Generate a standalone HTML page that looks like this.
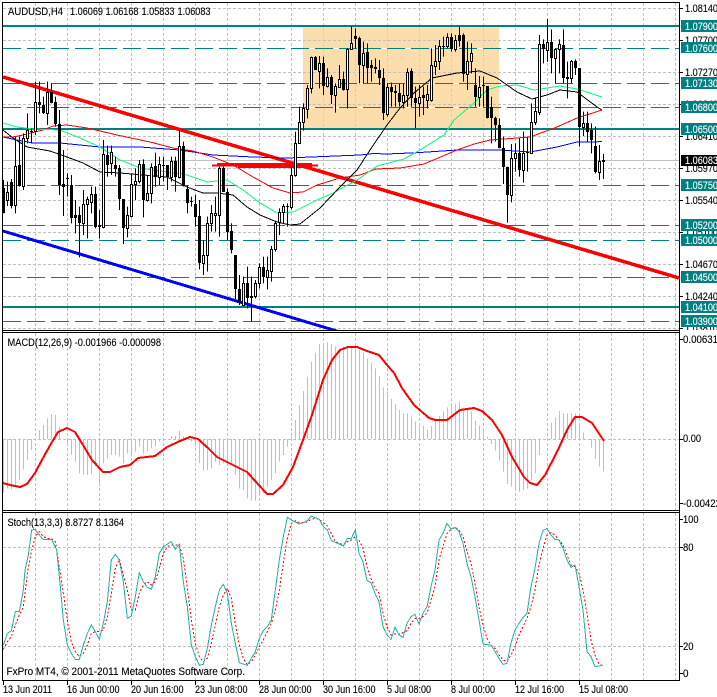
<!DOCTYPE html>
<html><head><meta charset="utf-8"><title>AUDUSD,H4</title>
<style>html,body{margin:0;padding:0;background:#fff;width:717px;height:697px;overflow:hidden}svg{display:block}
text{font-family:"Liberation Sans",sans-serif;font-size:11px;fill:#000;stroke:#000;stroke-width:.12}
.w{fill:#fff;stroke:#fff}</style></head><body>
<svg width="717" height="697" viewBox="0 0 717 697" xmlns="http://www.w3.org/2000/svg">
<defs><clipPath id="m"><rect x="3" y="3" width="676" height="327"/></clipPath><clipPath id="a"><rect x="680" y="0" width="37" height="330"/></clipPath></defs>
<rect width="717" height="697" fill="#fff"/>
<rect x="303" y="27" width="196" height="101" fill="#fcdeac"/>
<g shape-rendering="crispEdges">
<path d="M3 8.5H679M3 40.5H679M3 72.5H679M3 104.5H679M3 136.5H679M3 168.5H679M3 200.5H679M3 232.5H679M3 264.5H679M3 296.5H679M3 328.5H679M3 439.5H679M3 547.5H679M3 646.5H679" stroke="#c0c0c0" stroke-dasharray="3 2" fill="none"/>
<path d="M35.5 3V330M67.5 3V330M99.5 3V330M131.5 3V330M163.5 3V330M195.5 3V330M227.5 3V330M259.5 3V330M291.5 3V330M323.5 3V330M355.5 3V330M387.5 3V330M419.5 3V330M451.5 3V330M483.5 3V330M515.5 3V330M547.5 3V330M579.5 3V330M611.5 3V330M643.5 3V330M675.5 3V330M35.5 333V510M67.5 333V510M99.5 333V510M131.5 333V510M163.5 333V510M195.5 333V510M227.5 333V510M259.5 333V510M291.5 333V510M323.5 333V510M355.5 333V510M387.5 333V510M419.5 333V510M451.5 333V510M483.5 333V510M515.5 333V510M547.5 333V510M579.5 333V510M611.5 333V510M643.5 333V510M675.5 333V510M35.5 513V680M67.5 513V680M99.5 513V680M131.5 513V680M163.5 513V680M195.5 513V680M227.5 513V680M259.5 513V680M291.5 513V680M323.5 513V680M355.5 513V680M387.5 513V680M419.5 513V680M451.5 513V680M483.5 513V680M515.5 513V680M547.5 513V680M579.5 513V680M611.5 513V680M643.5 513V680M675.5 513V680" stroke="#c0c0c0" stroke-dasharray="3 2" fill="none"/>
<path d="M323.5 27V128M355.5 27V128M387.5 27V128M419.5 27V128M451.5 27V128M483.5 27V128" stroke="#dde0a8" stroke-dasharray="3 2" fill="none"/>
<path d="M3 160.5H679" stroke="#c0c0c0"/>
<path d="M303 48.5H499M303 83.5H499M303 107.5H499" stroke="#fff"/>
<path d="M3 48.5H679M3 83.5H679M3 107.5H679M3 185.5H679M3 225.5H679M3 240.5H679M3 277.5H679M3 321.5H679" stroke="#008080" stroke-dasharray="18 6" fill="none"/>
<path d="M3 26H679M3 129H679M3 307H679" stroke="#008080" stroke-width="2" fill="none"/>
</g>
<g clip-path="url(#m)" shape-rendering="crispEdges" fill="none">
<path d="M3 231L340 332" stroke="#0000ff" stroke-width="3"/>
<path d="M3 77L679 278" stroke="#ff0000" stroke-width="3.5"/>
<path d="M212 165.5H318" stroke="#ff0000" stroke-width="2"/>
<path d="M217 164.5H238" stroke="#ff0000" stroke-width="3"/>
<path d="M238 165.5H312" stroke="#ff0000" stroke-width="5"/>
<polyline stroke="#0000ff" points="3,137 17,140 33,143 60,143 100,147 140,147 180,150 213,155 253,157 287,158 360,155 374,153.5 387,154 417,152.7 457,150 500,150 530,152 557,147 577,142 602,141.7"/>
<polyline stroke="#ff0000" points="3,137 13,137 23,135 43,130 53,126 67,125 87,128 117,135 150,142 173,148 193,151 213,157 233,165 253,177 273,188 290,193 303,192 317,185 340,178 360,175 376,169 400,168 424,164 457,150 474,144 490,140 517,138 530,137 557,127 577,118 602,110"/>
<polyline stroke="#00ff7f" points="3,123 17,127 33,129 60,130 80,138 100,147 120,160 140,168 167,172 187,175 207,182 227,180 243,190 260,203 277,213 293,212 317,200 333,193 357,180 377,166 404,159 420,150 444,135 454,120 474,103 487,90 500,86 517,85 534,90 560,86 577,89 602,97"/>
<polyline stroke="#000" points="3,130 13,138 27,147 50,151 67,157 83,163 100,172 120,173 167,177 187,187 203,193 217,193 233,195 247,207 260,215 277,222 290,225 300,224 320,208 340,187 357,170 370,150 387,125 400,108 414,93 432,78 457,73 480,71 497,78 517,92 532,99 547,95 560,90 577,92 597,107 602,110"/>
<path transform="scale(1 .33333)" stroke="#000" d="M3.5 540V640M7.5 545V618M11.5 537V625M15.5 410V640M19.5 410V560M23.5 400V570M27.5 340V430M31.5 385V430M35.5 245V405M39.5 245V340M43.5 290V342M47.5 245V375M51.5 250V310M55.5 290V380M59.5 330V585M63.5 450V648M67.5 520V590M71.5 525V670M75.5 600V700M79.5 620V772M83.5 570V705M87.5 590V715M91.5 560V640M95.5 560V685M99.5 630V715M103.5 420V685M107.5 437V530M111.5 437V525M115.5 470V530M119.5 495V630M123.5 598V732M127.5 620V712M131.5 520V652M135.5 505V600M139.5 480V550M143.5 478V652M147.5 525V605M151.5 490V610M155.5 458V560M159.5 470V555M163.5 470V545M167.5 495V570M171.5 470V545M175.5 470V575M179.5 390V535M183.5 425V560M187.5 555V640M191.5 590V620M195.5 585V680M199.5 600V808M203.5 720V825M207.5 650V815M211.5 615V695M215.5 590V695M219.5 500V710M223.5 500V575M227.5 565V720M231.5 670V760M235.5 765V905M239.5 825V915M243.5 830V915M247.5 800V925M251.5 830V965M255.5 840V895M259.5 790V865M263.5 770V850M267.5 770V868M271.5 738V845M275.5 662V755M279.5 625V705M283.5 612V670M287.5 610V680M291.5 500V628M295.5 395V530M299.5 320V432M303.5 310V392M307.5 255V355M311.5 170V280M315.5 168V210M319.5 168V265M323.5 170V285M327.5 205V262M331.5 225V312M335.5 250V338M339.5 195V262M343.5 215V272M347.5 145V325M351.5 78V150M355.5 85V145M359.5 110V250M363.5 125V250M367.5 130V250M371.5 180V245M375.5 175V220M379.5 180V255M383.5 205V360M387.5 250V350M391.5 248V320M395.5 255V320M399.5 250V320M403.5 250V325M407.5 205V320M411.5 205V320M415.5 260V385M419.5 255V350M423.5 260V345M427.5 255V325M431.5 145V305M435.5 135V225M439.5 120V210M443.5 110V170M447.5 100V145M451.5 100V155M455.5 105V155M459.5 80V140M463.5 100V245M467.5 125V270M471.5 130V220M475.5 205V320M479.5 228V320M483.5 230V320M487.5 258V355M491.5 290V430M495.5 350V425M499.5 355V445M503.5 410V552M507.5 500V668M511.5 432V607M515.5 430V515M519.5 415V530M523.5 395V548M527.5 410V515M531.5 310V460M535.5 295V375M539.5 105V345M543.5 118V190M547.5 57V185M551.5 88V220M555.5 145V250M559.5 118V220M563.5 88V250M567.5 185V295M571.5 180V250M575.5 178V225M579.5 205V440M583.5 335V408M587.5 335V425M591.5 370V460M595.5 380V520M599.5 435V540M603.5 462V537"/>
<path fill="#000" stroke="none" d="M2 188h3V213h-3zM10 182h3V206h-3zM18 165h3V186h-3zM38 102h3V105h-3zM42 105h3V113h-3zM50 92h3V103h-3zM54 102h3V124h-3zM58 124h3V185h-3zM62 184h3V187h-3zM70 185h3V218h-3zM74 215h3V218h-3zM78 215h3V223h-3zM94 194h3V227h-3zM98 225h3V227h-3zM106 155h3V165h-3zM114 165h3V169h-3zM118 168h3V199h-3zM122 199h3V228h-3zM142 164h3V200h-3zM154 166h3V177h-3zM166 165h3V177h-3zM174 161h3V177h-3zM182 146h3V186h-3zM186 189h3V203h-3zM194 204h3V217h-3zM198 216h3V263h-3zM222 168h3V192h-3zM226 192h3V232h-3zM230 231h3V250h-3zM234 255h3V289h-3zM238 289h3V302h-3zM246 283h3V298h-3zM250 296h3V298h-3zM262 267h3V277h-3zM314 57h3V70h-3zM322 63h3V86h-3zM330 77h3V95h-3zM342 79h3V90h-3zM354 36h3V39h-3zM358 38h3V65h-3zM366 52h3V68h-3zM370 65h3V68h-3zM374 67h3V69h-3zM378 70h3V78h-3zM382 78h3V113h-3zM390 87h3V92h-3zM394 91h3V93h-3zM398 93h3V102h-3zM410 71h3V98h-3zM414 98h3V103h-3zM422 95h3V98h-3zM450 37h3V49h-3zM458 35h3V41h-3zM462 35h3V74h-3zM474 85h3V97h-3zM486 86h3V118h-3zM490 107h3V118h-3zM494 118h3V125h-3zM498 125h3V148h-3zM502 148h3V167h-3zM506 167h3V195h-3zM518 153h3V170h-3zM542 44h3V49h-3zM550 42h3V58h-3zM562 45h3V78h-3zM574 61h3V68h-3zM578 68h3V127h-3zM586 123h3V132h-3zM590 130h3V140h-3zM594 146h3V172h-3zM30 131h3v1h-3zM66 178h3v1h-3zM162 165h3v1h-3zM190 201h3v1h-3zM286 206h3v1h-3zM442 46h3v1h-3zM482 85h3v1h-3zM526 152h3v1h-3zM602 160h3v2h-3z"/>
<path fill="#fff" stroke="#000" d="M6.5 192.5h2V200.5h-2zM14.5 166.5h2V205.5h-2zM22.5 138.5h2V186.5h-2zM26.5 130.5h2V138.5h-2zM34.5 102.5h2V131.5h-2zM46.5 92.5h2V113.5h-2zM82.5 204.5h2V223.5h-2zM86.5 199.5h2V204.5h-2zM90.5 194.5h2V202.5h-2zM102.5 154.5h2V227.5h-2zM110.5 152.5h2V163.5h-2zM126.5 215.5h2V228.5h-2zM130.5 184.5h2V216.5h-2zM134.5 181.5h2V184.5h-2zM138.5 164.5h2V181.5h-2zM146.5 193.5h2V200.5h-2zM150.5 167.5h2V193.5h-2zM158.5 164.5h2V177.5h-2zM170.5 161.5h2V177.5h-2zM178.5 146.5h2V177.5h-2zM202.5 255.5h2V263.5h-2zM206.5 223.5h2V255.5h-2zM210.5 213.5h2V223.5h-2zM214.5 213.5h2V215.5h-2zM218.5 168.5h2V215.5h-2zM242.5 283.5h2V305.5h-2zM254.5 283.5h2V296.5h-2zM258.5 267.5h2V283.5h-2zM266.5 270.5h2V277.5h-2zM270.5 249.5h2V271.5h-2zM274.5 223.5h2V249.5h-2zM278.5 212.5h2V222.5h-2zM282.5 206.5h2V212.5h-2zM290.5 175.5h2V207.5h-2zM294.5 143.5h2V175.5h-2zM298.5 122.5h2V143.5h-2zM302.5 108.5h2V122.5h-2zM306.5 88.5h2V109.5h-2zM310.5 57.5h2V88.5h-2zM318.5 63.5h2V71.5h-2zM326.5 77.5h2V86.5h-2zM334.5 86.5h2V95.5h-2zM338.5 79.5h2V87.5h-2zM346.5 49.5h2V89.5h-2zM350.5 43.5h2V49.5h-2zM362.5 53.5h2V65.5h-2zM386.5 87.5h2V114.5h-2zM402.5 95.5h2V102.5h-2zM406.5 72.5h2V95.5h-2zM418.5 97.5h2V103.5h-2zM426.5 94.5h2V100.5h-2zM430.5 65.5h2V100.5h-2zM434.5 61.5h2V66.5h-2zM438.5 46.5h2V61.5h-2zM446.5 37.5h2V46.5h-2zM454.5 40.5h2V49.5h-2zM466.5 61.5h2V74.5h-2zM470.5 53.5h2V61.5h-2zM478.5 87.5h2V97.5h-2zM510.5 158.5h2V195.5h-2zM514.5 153.5h2V158.5h-2zM522.5 153.5h2V170.5h-2zM530.5 122.5h2V153.5h-2zM534.5 111.5h2V122.5h-2zM538.5 44.5h2V112.5h-2zM546.5 42.5h2V50.5h-2zM554.5 49.5h2V58.5h-2zM558.5 44.5h2V49.5h-2zM566.5 77.5h2V78.5h-2zM570.5 61.5h2V78.5h-2zM582.5 123.5h2V127.5h-2zM598.5 161.5h2V172.5h-2z"/>
</g>
<g shape-rendering="crispEdges" fill="none">
<path transform="translate(0 330) scale(1 .33333)" stroke="#c0c0c0" d="M3.5 327V488M7.5 327V475M11.5 327V478M15.5 327V470M19.5 327V450M23.5 327V418M27.5 327V390M31.5 327V360M35.5 327V330M39.5 327V300M43.5 327V285M47.5 327V265M51.5 327V252M55.5 327V255M59.5 327V290M67.5 327V345M71.5 327V375M75.5 327V395M79.5 327V430M83.5 327V433M87.5 327V435M91.5 327V432M95.5 327V410M99.5 327V465M103.5 327V400M107.5 327V385M111.5 327V375M115.5 327V375M119.5 327V380M123.5 327V400M127.5 327V370M131.5 327V380M135.5 327V365M139.5 327V350M143.5 327V370M147.5 327V365M151.5 327V355M155.5 327V350M159.5 327V335M163.5 327V330M171.5 327V318M175.5 327V318M179.5 327V302M183.5 327V320M187.5 327V325M191.5 327V335M195.5 327V350M199.5 327V400M203.5 327V422M207.5 327V420M211.5 327V415M215.5 327V395M219.5 327V405M223.5 327V400M227.5 327V400M231.5 327V405M235.5 327V435M239.5 327V475M243.5 327V480M247.5 327V505M251.5 327V512M255.5 327V512M259.5 327V498M263.5 327V490M267.5 327V470M271.5 327V450M275.5 327V430M279.5 327V395M283.5 327V375M287.5 327V350M291.5 327V320M295.5 327V270M299.5 327V225M303.5 327V183M307.5 327V140M311.5 327V95M315.5 327V68M319.5 327V42M323.5 327V40M327.5 327V37M331.5 327V42M335.5 327V50M339.5 327V55M343.5 327V50M347.5 327V48M351.5 327V50M355.5 327V52M359.5 327V60M363.5 327V68M367.5 327V85M371.5 327V100M375.5 327V115M379.5 327V138M383.5 327V172M387.5 327V185M391.5 327V207M395.5 327V222M399.5 327V240M403.5 327V250M407.5 327V250M411.5 327V260M415.5 327V275M419.5 327V280M423.5 327V287M427.5 327V298M431.5 327V288M435.5 327V270M439.5 327V258M443.5 327V245M447.5 327V232M451.5 327V222M455.5 327V220M459.5 327V215M463.5 327V235M467.5 327V240M471.5 327V245M475.5 327V272M479.5 327V287M483.5 327V295M487.5 327V320M491.5 327V342M495.5 327V362M499.5 327V392M503.5 327V425M507.5 327V462M511.5 327V470M515.5 327V482M519.5 327V485M523.5 327V480M527.5 327V476M531.5 327V450M535.5 327V430M539.5 327V375M547.5 327V325M551.5 327V278M555.5 327V262M559.5 327V243M563.5 327V250M567.5 327V250M571.5 327V250M575.5 327V250M579.5 327V285M583.5 327V308M591.5 327V353M595.5 327V387M599.5 327V410M603.5 327V425"/>
<polyline stroke="#ff0000" stroke-width="2" points="3,483 10,485 20,487 27,484 35,473 43,458 52,442 58,432 67,428 75,432 83,445 92,460 103,472 110,472 120,467 130,465 138,458 155,456 167,447 180,441 190,437 198,439 208,448 217,457 227,462 237,467 247,472 257,483 267,494 273,494 283,485 293,467 303,440 312,415 323,380 332,360 340,350 348,347 357,347 367,351 379,355 387,365 394,373 402,388 414,405 429,418 435,420 447,420 460,410 474,408 482,411 492,420 502,435 512,457 524,477 530,483 537,485 545,475 557,452 567,430 575,417 582,417 592,423 604,441"/>
<polyline transform="translate(0 510) scale(.33333)" vector-effect="non-scaling-stroke" stroke="#ff0000" stroke-dasharray="2 2" points="10,418 22,395 34,380 46,345 58,315 70,290 82,190 94,125 106,80 118,65 130,80 142,85 154,85 166,95 178,170 190,250 202,330 214,395 226,425 238,440 250,430 262,405 274,370 286,365 298,365 310,360 322,320 334,250 346,175 358,147 370,195 382,240 394,300 406,300 418,250 430,225 442,215 454,225 466,215 478,175 490,130 502,110 514,105 526,105 538,105 550,145 562,235 574,330 586,400 598,440 610,455 622,445 634,400 646,345 658,290 670,255 682,235 694,265 706,340 718,405 730,445 742,465 754,455 766,435 778,410 790,390 802,365 814,340 826,300 838,240 850,160 862,85 874,40 886,32 898,38 910,38 922,35 934,28 946,25 958,28 970,38 982,48 994,70 1006,95 1018,100 1030,105 1042,95 1054,90 1066,80 1071,85"/>
<polyline transform="translate(357 510) scale(.33333)" vector-effect="non-scaling-stroke" stroke="#ff0000" stroke-dasharray="2 2" points="6,90 18,115 30,170 42,205 54,235 66,250 78,310 90,350 102,375 114,372 126,372 138,368 150,362 162,340 174,325 186,325 198,320 210,310 222,270 234,230 246,150 258,110 270,70 282,58 294,52 306,60 318,80 330,125 342,160 354,220 366,290 378,345 390,385 402,405 414,415 426,435 438,450 450,455 462,435 474,410 486,375 498,350 510,325 522,290 534,240 546,165 558,115 570,75 582,68 594,75 606,90 618,105 630,135 642,165 654,170 666,190 678,240 690,310 702,390 714,435 726,462 738,467"/>
<polyline transform="translate(0 510) scale(.33333)" vector-effect="non-scaling-stroke" stroke="#20b2aa" points="10,405 22,370 34,362 46,305 58,305 70,240 75,180 85,135 95,60 105,58 118,75 130,88 155,88 170,120 180,220 190,330 202,405 214,430 226,448 238,448 250,405 262,370 274,345 286,365 298,388 310,340 322,275 334,150 346,133 358,150 370,215 382,325 394,318 406,260 418,188 430,215 442,232 454,238 466,200 478,130 490,110 514,95 526,118 538,103 550,215 562,290 574,405 586,440 598,466 610,463 622,415 634,345 646,290 658,240 670,223 682,250 694,340 706,400 718,458 742,466 754,445 766,425 778,385 790,362 802,350 814,330 826,240 838,150 850,80 862,22 874,30 898,42 910,38 922,32 934,18 958,28 970,50 982,60 994,92 1018,102 1030,108 1042,85 1054,85 1066,60 1071,90"/>
<polyline transform="translate(357 510) scale(.33333)" vector-effect="non-scaling-stroke" stroke="#20b2aa" points="0,90 6,130 18,155 30,212 42,218 54,250 66,275 78,350 90,375 102,388 114,352 126,375 138,382 150,340 162,320 174,313 186,342 198,310 210,290 222,230 234,180 246,90 258,70 270,40 282,57 294,52 306,65 318,100 330,160 342,200 354,260 366,330 378,402 390,404 402,405 414,425 426,445 438,463 450,460 462,400 474,360 486,340 498,322 510,310 522,230 534,175 546,100 558,62 570,55 582,75 594,88 606,90 618,115 630,150 642,172 654,165 666,230 678,300 690,425 702,440 714,470 726,468 733,467"/>
<path stroke="#000" d="M2 2.5H680M2 330.5H680M2 332.5H680M2 510.5H680M2 512.5H680M2 680.5H680M2.5 2V681M679.5 2V681"/>
<path stroke="#000" d="M679 8.5h4M679 40.5h4M679 72.5h4M679 104.5h4M679 136.5h4M679 168.5h4M679 200.5h4M679 232.5h4M679 264.5h4M679 296.5h4M679 328.5h4M679 339.5h4M679 439.5h4M679 503.5h4M679 519.5h4M679 547.5h4M679 646.5h4M679 673.5h4M3.5 680V685M67.5 680V685M131.5 680V685M195.5 680V685M259.5 680V685M323.5 680V685M387.5 680V685M451.5 680V685M515.5 680V685M579.5 680V685"/>
</g>
<text x="8" y="15" textLength="55" lengthAdjust="spacingAndGlyphs">AUDUSD,H4</text>
<text x="70" y="15" textLength="33" lengthAdjust="spacingAndGlyphs">1.06069</text>
<text x="105.5" y="15" textLength="33" lengthAdjust="spacingAndGlyphs">1.06168</text>
<text x="141.5" y="15" textLength="33" lengthAdjust="spacingAndGlyphs">1.05833</text>
<text x="177.5" y="15" textLength="33" lengthAdjust="spacingAndGlyphs">1.06083</text>
<text x="7.5" y="346" textLength="153.5" lengthAdjust="spacingAndGlyphs">MACD(12,26,9) -0.001966 -0.000098</text>
<text x="7.5" y="526" textLength="116.5" lengthAdjust="spacingAndGlyphs">Stoch(13,3,3) 8.8727 8.1364</text>
<text x="6.5" y="675" textLength="238.5" lengthAdjust="spacingAndGlyphs">FxPro MT4, © 2001-2011 MetaQuotes Software Corp.</text>
<g>
<text x="3" y="693" textLength="49" lengthAdjust="spacingAndGlyphs">13 Jun 2011</text>
<text x="67" y="693" textLength="52.5" lengthAdjust="spacingAndGlyphs">16 Jun 00:00</text>
<text x="131" y="693" textLength="52.5" lengthAdjust="spacingAndGlyphs">20 Jun 16:00</text>
<text x="195" y="693" textLength="52.5" lengthAdjust="spacingAndGlyphs">23 Jun 08:00</text>
<text x="259" y="693" textLength="52.5" lengthAdjust="spacingAndGlyphs">28 Jun 00:00</text>
<text x="323" y="693" textLength="52.5" lengthAdjust="spacingAndGlyphs">30 Jun 16:00</text>
<text x="387" y="693" textLength="44" lengthAdjust="spacingAndGlyphs">5 Jul 08:00</text>
<text x="451" y="693" textLength="44" lengthAdjust="spacingAndGlyphs">8 Jul 00:00</text>
<text x="515" y="693" textLength="49" lengthAdjust="spacingAndGlyphs">12 Jul 16:00</text>
<text x="579" y="693" textLength="49" lengthAdjust="spacingAndGlyphs">15 Jul 08:00</text>
</g>
<g clip-path="url(#a)">
<text x="685" y="12" textLength="33" lengthAdjust="spacingAndGlyphs">1.08140</text>
<text x="685" y="44" textLength="33" lengthAdjust="spacingAndGlyphs">1.07700</text>
<text x="685" y="76" textLength="33" lengthAdjust="spacingAndGlyphs">1.07270</text>
<text x="685" y="108" textLength="33" lengthAdjust="spacingAndGlyphs">1.06840</text>
<text x="685" y="140" textLength="33" lengthAdjust="spacingAndGlyphs">1.06410</text>
<text x="685" y="172" textLength="33" lengthAdjust="spacingAndGlyphs">1.05970</text>
<text x="685" y="204" textLength="33" lengthAdjust="spacingAndGlyphs">1.05540</text>
<text x="685" y="236" textLength="33" lengthAdjust="spacingAndGlyphs">1.05100</text>
<text x="685" y="268" textLength="33" lengthAdjust="spacingAndGlyphs">1.04670</text>
<text x="685" y="300" textLength="33" lengthAdjust="spacingAndGlyphs">1.04240</text>
<text x="685" y="332" textLength="33" lengthAdjust="spacingAndGlyphs">1.03810</text>
<rect x="681" y="20" width="36" height="12" fill="#008080"/><rect x="681" y="42" width="36" height="11" fill="#008080"/><rect x="681" y="77" width="36" height="12" fill="#008080"/><rect x="681" y="101" width="36" height="12" fill="#008080"/><rect x="681" y="123" width="36" height="12" fill="#008080"/><rect x="681" y="179" width="36" height="12" fill="#008080"/><rect x="681" y="219" width="36" height="12" fill="#008080"/><rect x="681" y="234" width="36" height="12" fill="#008080"/><rect x="681" y="271" width="36" height="12" fill="#008080"/><rect x="681" y="301" width="36" height="12" fill="#008080"/><rect x="681" y="315" width="36" height="12" fill="#008080"/>
<rect x="681" y="155" width="36" height="11" fill="#000"/>
<text class="w" x="685" y="30" textLength="33" lengthAdjust="spacingAndGlyphs">1.07900</text>
<text class="w" x="685" y="52" textLength="33" lengthAdjust="spacingAndGlyphs">1.07600</text>
<text class="w" x="685" y="87" textLength="33" lengthAdjust="spacingAndGlyphs">1.07130</text>
<text class="w" x="685" y="111" textLength="33" lengthAdjust="spacingAndGlyphs">1.06800</text>
<text class="w" x="685" y="133" textLength="33" lengthAdjust="spacingAndGlyphs">1.06500</text>
<text class="w" x="685" y="164" textLength="33" lengthAdjust="spacingAndGlyphs">1.06083</text>
<text class="w" x="685" y="189" textLength="33" lengthAdjust="spacingAndGlyphs">1.05750</text>
<text class="w" x="685" y="229" textLength="33" lengthAdjust="spacingAndGlyphs">1.05200</text>
<text class="w" x="685" y="244" textLength="33" lengthAdjust="spacingAndGlyphs">1.05000</text>
<text class="w" x="685" y="281" textLength="33" lengthAdjust="spacingAndGlyphs">1.04500</text>
<text class="w" x="685" y="311" textLength="33" lengthAdjust="spacingAndGlyphs">1.04100</text>
<text class="w" x="685" y="325" textLength="33" lengthAdjust="spacingAndGlyphs">1.03900</text>
</g>
<text x="683" y="343" textLength="35" lengthAdjust="spacingAndGlyphs">0.00631</text>
<text x="683" y="442" textLength="18" lengthAdjust="spacingAndGlyphs">0.00</text>
<text x="683" y="507" textLength="38" lengthAdjust="spacingAndGlyphs">-0.00422</text>
<text x="683" y="523" textLength="15.5" lengthAdjust="spacingAndGlyphs">100</text>
<text x="683" y="551" textLength="10.5" lengthAdjust="spacingAndGlyphs">80</text>
<text x="683" y="650" textLength="10.5" lengthAdjust="spacingAndGlyphs">20</text>
<text x="683" y="677" textLength="5.5" lengthAdjust="spacingAndGlyphs">0</text>
</svg>
</body></html>
